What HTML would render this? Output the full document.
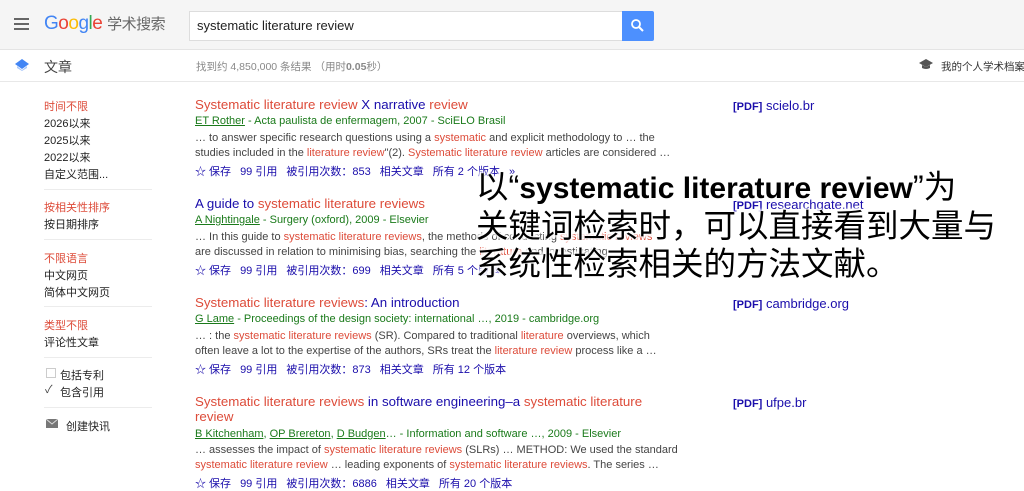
<!DOCTYPE html>
<html><head><meta charset="utf-8"><style>
*{margin:0;padding:0;box-sizing:border-box}
body{width:1024px;height:491px;overflow:hidden;background:#fff;font-family:"Liberation Sans","Noto Sans CJK SC",sans-serif;position:relative;color:#222}
.a{position:absolute;white-space:nowrap}
.hdr{position:absolute;left:0;top:0;width:1024px;height:50px;background:#f5f5f5;border-bottom:1px solid #e4e4e4}
.bar2{position:absolute;left:0;top:50px;width:1024px;height:32px;border-bottom:1px solid #e8e8e8}
.side{font-size:11px;color:#222;left:44px}
.red{color:#dd4b39}
.hr{position:absolute;left:44px;width:108px;height:1px;background:#ececec}
.t{font-size:13.3px;color:#1a0dab;left:195px}
.t .r,.s .r{color:#dd4b39}
.au{font-size:11px;color:#1a7a1a;left:195px}
.au u{color:#1a7a1a}
.s{font-size:11px;color:#444;left:195px}
.ac{font-size:11px;color:#1a0dab;left:195px}
.ac span{margin-right:9px}
.pdf{font-size:13px;color:#1a0dab;left:733px}
.pdf b{font-size:11px}
.ov{position:absolute;left:476px;font-size:32.5px;color:#000;font-weight:normal;white-space:nowrap;text-shadow:0 0 3px #fff,0 0 3px #fff,0 0 3px #fff,2px 2px 2px #fff,-2px -2px 2px #fff;font-family:"Liberation Sans","Noto Sans CJK SC",sans-serif;line-height:38px}
</style></head><body>
<div class="hdr"></div>
<div class="a" style="left:14px;top:18px;width:15px;height:2px;background:#666;box-shadow:0 5px 0 #666,0 10px 0 #666"></div>
<div class="a" style="left:44px;top:13px;font-size:19px;letter-spacing:-0.5px"><span style="color:#4285f4">G</span><span style="color:#ea4335">o</span><span style="color:#fbbc05">o</span><span style="color:#4285f4">g</span><span style="color:#34a853">l</span><span style="color:#ea4335">e</span> <span style="color:#666;font-size:15px">学术搜索</span></div>
<div class="a" style="left:189px;top:11px;width:434px;height:30px;background:#fff;border:1px solid #ddd"></div>
<div class="a" style="left:197px;top:18px;font-size:13px;color:#222">systematic literature review</div>
<div class="a" style="left:622px;top:11px;width:32px;height:30px;background:#4d90fe;border-radius:0 2px 2px 0"></div>
<svg class="a" style="left:630px;top:18px" width="16" height="16"><circle cx="6" cy="6" r="4" stroke="#fff" stroke-width="1.8" fill="none"/><line x1="9" y1="9" x2="13" y2="13" stroke="#fff" stroke-width="2"/></svg>
<div class="bar2"></div>
<svg class="a" style="left:14px;top:58px" width="16" height="14"><path d="M8 1L15 6L8 11L1 6Z" fill="#4285f4"/><path d="M3 8L8 12L13 8L13 10L8 13L3 10Z" fill="#a8c7fa"/></svg>
<div class="a" style="left:44px;top:57px;font-size:14px;color:#444">文章</div>
<div class="a" style="left:196px;top:59px;font-size:10.5px;color:#888">找到约 4,850,000 条结果 （用时<b>0.05</b>秒）</div>
<svg class="a" style="left:919px;top:59px" width="14" height="11"><path d="M7 0L14 4L7 8L0 4Z" fill="#555"/><path d="M3 6V9Q7 11 11 9V6L7 8Z" fill="#555"/></svg>
<div class="a" style="left:941px;top:59px;font-size:10.5px;color:#333">我的个人学术档案</div>

<div class="a side red" style="top:98px">时间不限</div>
<div class="a side" style="top:115px">2026以来</div>
<div class="a side" style="top:132px">2025以来</div>
<div class="a side" style="top:149px">2022以来</div>
<div class="a side" style="top:166px">自定义范围...</div>
<div class="hr" style="top:189px"></div>
<div class="a side red" style="top:199px">按相关性排序</div>
<div class="a side" style="top:216px">按日期排序</div>
<div class="hr" style="top:239px"></div>
<div class="a side red" style="top:250px">不限语言</div>
<div class="a side" style="top:267px">中文网页</div>
<div class="a side" style="top:284px">简体中文网页</div>
<div class="hr" style="top:306px"></div>
<div class="a side red" style="top:317px">类型不限</div>
<div class="a side" style="top:334px">评论性文章</div>
<div class="hr" style="top:357px"></div>
<div class="a" style="left:46px;top:368px;width:10px;height:10px;border:1px solid #ccc"></div>
<div class="a side" style="left:60px;top:367px">包括专利</div>
<div class="a" style="left:45px;top:381px;font-size:11px;color:#444">✓</div>
<div class="a side" style="left:60px;top:384px">包含引用</div>
<div class="hr" style="top:407px"></div>
<svg class="a" style="left:46px;top:419px" width="12" height="9"><rect width="12" height="9" fill="#777"/><path d="M0 0L6 5L12 0" stroke="#ddd" fill="none"/></svg>
<div class="a side" style="left:66px;top:418px">创建快讯</div>

<div class="a t" style="top:97px"><span class="r">Systematic literature review</span> X narrative <span class="r">review</span></div>
<div class="a au" style="top:115px"><u>ET Rother</u> - Acta paulista de enfermagem, 2007 - SciELO Brasil</div>
<div class="a s" style="top:132px">… to answer specific research questions using a <span class="r">systematic</span> and explicit methodology to … the</div>
<div class="a s" style="top:147px">studies included in the <span class="r">literature review</span>"(2). <span class="r">Systematic literature review</span> articles are considered …</div>
<div class="a ac" style="top:163px"><span>☆ 保存</span><span>99 引用</span><span>被引用次数：853</span><span>相关文章</span><span>所有 2 个版本</span><span>»</span></div>
<div class="a pdf" style="top:98px"><b>[PDF]</b> scielo.br</div>

<div class="a t" style="top:196px">A guide to <span class="r">systematic literature reviews</span></div>
<div class="a au" style="top:214px"><u>A Nightingale</u> - Surgery (oxford), 2009 - Elsevier</div>
<div class="a s" style="top:231px">… In this guide to <span class="r">systematic literature reviews</span>, the methods of conducting <span class="r">systematic reviews</span></div>
<div class="a s" style="top:246px">are discussed in relation to minimising bias, searching the <span class="r">literature</span> and investigating</div>
<div class="a ac" style="top:262px"><span>☆ 保存</span><span>99 引用</span><span>被引用次数：699</span><span>相关文章</span><span>所有 5 个版本</span></div>
<div class="a pdf" style="top:197px"><b>[PDF]</b> researchgate.net</div>

<div class="a t" style="top:295px"><span class="r">Systematic literature reviews</span>: An introduction</div>
<div class="a au" style="top:313px"><u>G Lame</u> - Proceedings of the design society: international …, 2019 - cambridge.org</div>
<div class="a s" style="top:330px">… : the <span class="r">systematic literature reviews</span> (SR). Compared to traditional <span class="r">literature</span> overviews, which</div>
<div class="a s" style="top:345px">often leave a lot to the expertise of the authors, SRs treat the <span class="r">literature review</span> process like a …</div>
<div class="a ac" style="top:361px"><span>☆ 保存</span><span>99 引用</span><span>被引用次数：873</span><span>相关文章</span><span>所有 12 个版本</span></div>
<div class="a pdf" style="top:296px"><b>[PDF]</b> cambridge.org</div>

<div class="a t" style="top:394px"><span class="r">Systematic literature reviews</span> in software engineering–a <span class="r">systematic literature</span></div>
<div class="a t" style="top:409px"><span class="r">review</span></div>
<div class="a au" style="top:428px"><u>B Kitchenham</u>, <u>OP Brereton</u>, <u>D Budgen</u>… - Information and software …, 2009 - Elsevier</div>
<div class="a s" style="top:444px">… assesses the impact of <span class="r">systematic literature reviews</span> (SLRs) … METHOD: We used the standard</div>
<div class="a s" style="top:459px"><span class="r">systematic literature review</span> … leading exponents of <span class="r">systematic literature reviews</span>. The series …</div>
<div class="a ac" style="top:475px"><span>☆ 保存</span><span>99 引用</span><span>被引用次数：6886</span><span>相关文章</span><span>所有 20 个版本</span></div>
<div class="a pdf" style="top:395px"><b>[PDF]</b> ufpe.br</div>

<div class="ov" style="top:168px">以“<b style="font-weight:bold;font-size:30px">systematic literature review</b>”为</div>
<div class="ov" style="top:207px">关键词检索时，可以直接看到大量与</div>
<div class="ov" style="top:245px">系统性检索相关的方法文献。</div>
</body></html>
